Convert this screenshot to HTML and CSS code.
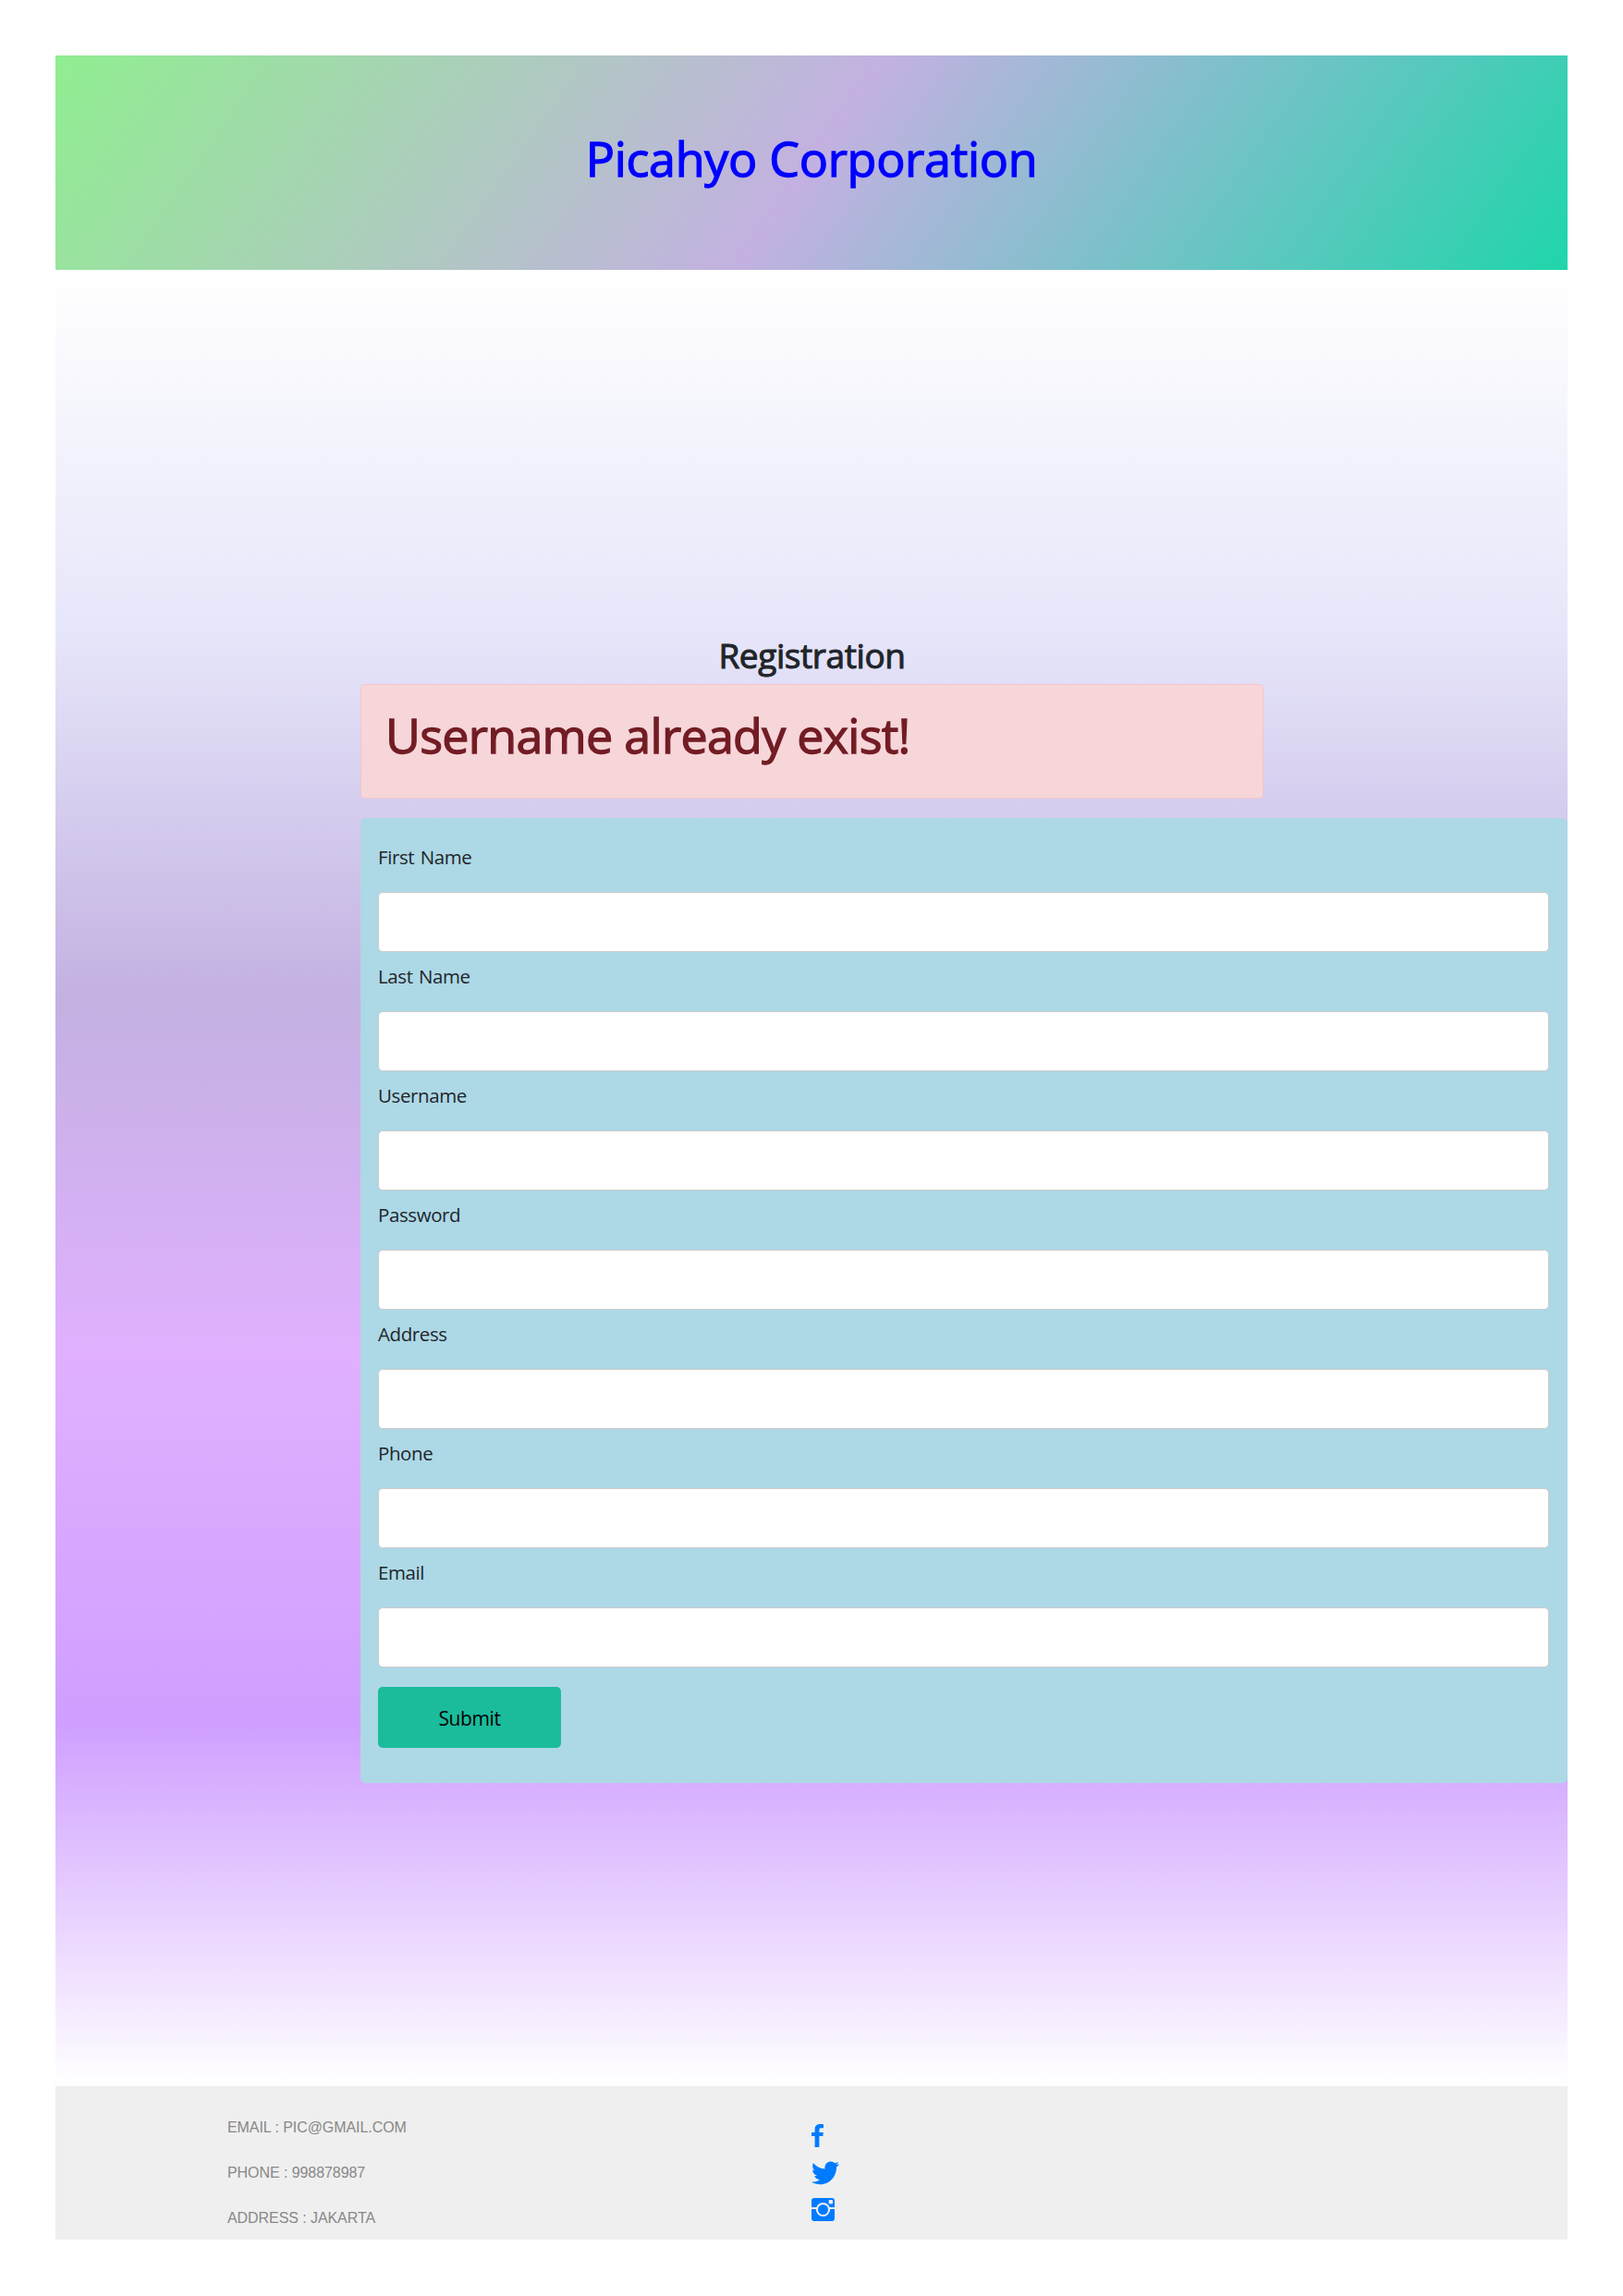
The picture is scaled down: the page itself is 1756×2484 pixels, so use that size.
FILE: index.html
```html
<!DOCTYPE html>
<html lang="en">
<head>
<meta charset="utf-8">
<title>Picahyo Corporation</title>
<link rel="stylesheet" href="styles.css">
</head>
<body>
<header class="banner"><h1 class="brand">Picahyo Corporation</h1></header>
<main class="content">
<h2 class="title">Registration</h2>
<div class="alert">Username already exist!</div>
<form class="card">
<label class="field"><span>First Name</span><input type="text"></label>
<label class="field"><span>Last Name</span><input type="text"></label>
<label class="field"><span>Username</span><input type="text"></label>
<label class="field"><span>Password</span><input type="password"></label>
<label class="field"><span>Address</span><input type="text"></label>
<label class="field"><span>Phone</span><input type="text"></label>
<label class="field"><span>Email</span><input type="text"></label>
<button class="submit" type="button">Submit</button>
</form>
</main>
<footer class="footer">
<div class="contact"><p>EMAIL : PIC@GMAIL.COM</p><p>PHONE : 998878987</p><p>ADDRESS : JAKARTA</p></div>
<div class="social">
<svg width="14" height="26" viewBox="0 0 14 26"><path d="M13 .3v4H10.5C8.800 4.300 8.400 5.100 8.400 6.400V9H12.900L12.300 13H8.400V25H3.600V13H0V9H3.600V5.700C3.600 2.100 5.900 0 9.300 0 11 0 12.400.100 13 .3Z"/></svg>
<svg width="30" height="26" viewBox="0 0 30 26"><path d="M30 3.500C29.200 4.700 28.200 5.700 27 6.500 27.300 15.500 20.500 25.300 9.500 25.300 6 25.300 2.800 24.300 0 22.500 3.200 22.800 6.400 22 9 20 6.300 20 4.100 18.300 3.300 15.900 4.200 16 5.100 16 6 15.700 3 15 1.100 12.500 1.100 9.600 2 10.100 2.900 10.300 3.900 10.400 1.100 8.400.400 4.900 2 2.200 5.100 6 9.700 8.300 14.600 8.500 13.600 4.500 16.600.400 20.700.400 22.500.400 24.100 1.100 25.200 2.300 26.600 2 27.900 1.500 29.100.800 28.600 2.300 27.700 3.300 26.500 4.100 27.700 4 28.900 3.800 30 3.500Z"/></svg>
<svg width="25" height="25" viewBox="0 0 25 25"><path d="M3 0H22Q25 0 25 3V10H18.400A6.600 6.600 0 0 0 6.600 10H0V3Q0 0 3 0ZM0 12H5.300A7.300 7.300 0 0 0 19.700 12H25V22Q25 25 22 25H3Q0 25 0 22Z"/><circle cx="12.500" cy="12.500" r="7.600" fill="#efefef"/><circle cx="12.500" cy="12.500" r="5.500"/><rect x="18.700" y="2" width="4.300" height="4.200" rx=".7" fill="#efefef"/></svg>
</div>
</footer>
</body>
</html>
```
FILE: styles.css
```css
* { box-sizing: border-box; }
body { margin: 0; padding: 60px 60px 0; background: #fff; color: #212529; font-family: "Open Sans", "Noto Sans", sans-serif; font-size: 20.500px; letter-spacing: -.4px; word-spacing: 1.500px; }
h1, h2, p { margin: 0; }
.banner { height: 232px; display: flex; justify-content: center; padding-top: 75px; background: linear-gradient(125deg, #90ee90, #c3b1e1, #1fd5ab); }
.brand, .title, .alert { font-weight: 400; -webkit-text-stroke: 1.300px currentColor; word-spacing: 0; }
.brand { color: #00f; font-size: 52px; line-height: 72px; letter-spacing: -.3px; }
.content { height: 1965px; padding: 390px 0 0 330px; background: linear-gradient(#fff, #e6e6fa, #c3b1e1, #e0b0ff, #cf9fff, #fff); }
.title { width: 977px; height: 58px; line-height: 53px; text-align: center; font-size: 37px; -webkit-text-stroke-width: 1px; }
.alert { width: 977px; height: 124px; border: 1px solid #f5c6cb; border-radius: 5px; background: #f6d6d9; color: #721c24; padding: 18px 26px; font-size: 52px; line-height: 72px; letter-spacing: -.72px; }
.card { margin-top: 21px; height: 1044px; padding: 16px 20px 0 19px; border-radius: 6px; background: #add8e6; }
.field { display: block; height: 129px; }
.field span { display: block; height: 64px; line-height: 53px; }
.field input { display: block; width: 100%; height: 65px; border: 1px solid #ccc; border-radius: 5px; background: #fff; }
.submit { display: block; margin-top: 21px; width: 198px; height: 66px; padding: 2px 0 0; border: 0; border-radius: 5px; background: #1abc9c; color: #000; font: inherit; font-size: 21px; letter-spacing: inherit; }
.footer { height: 166px; display: flex; background: #efefef; padding: 20px 0 0 186px; font-family: "Liberation Sans", sans-serif; letter-spacing: -.07px; word-spacing: 0; }
.contact { width: 632px; color: #888; font-size: 16px; line-height: 49px; }
.social { display: flex; flex-direction: column; gap: 14px; padding-top: 21px; fill: #007bff; }
.social svg { display: block; }
```
